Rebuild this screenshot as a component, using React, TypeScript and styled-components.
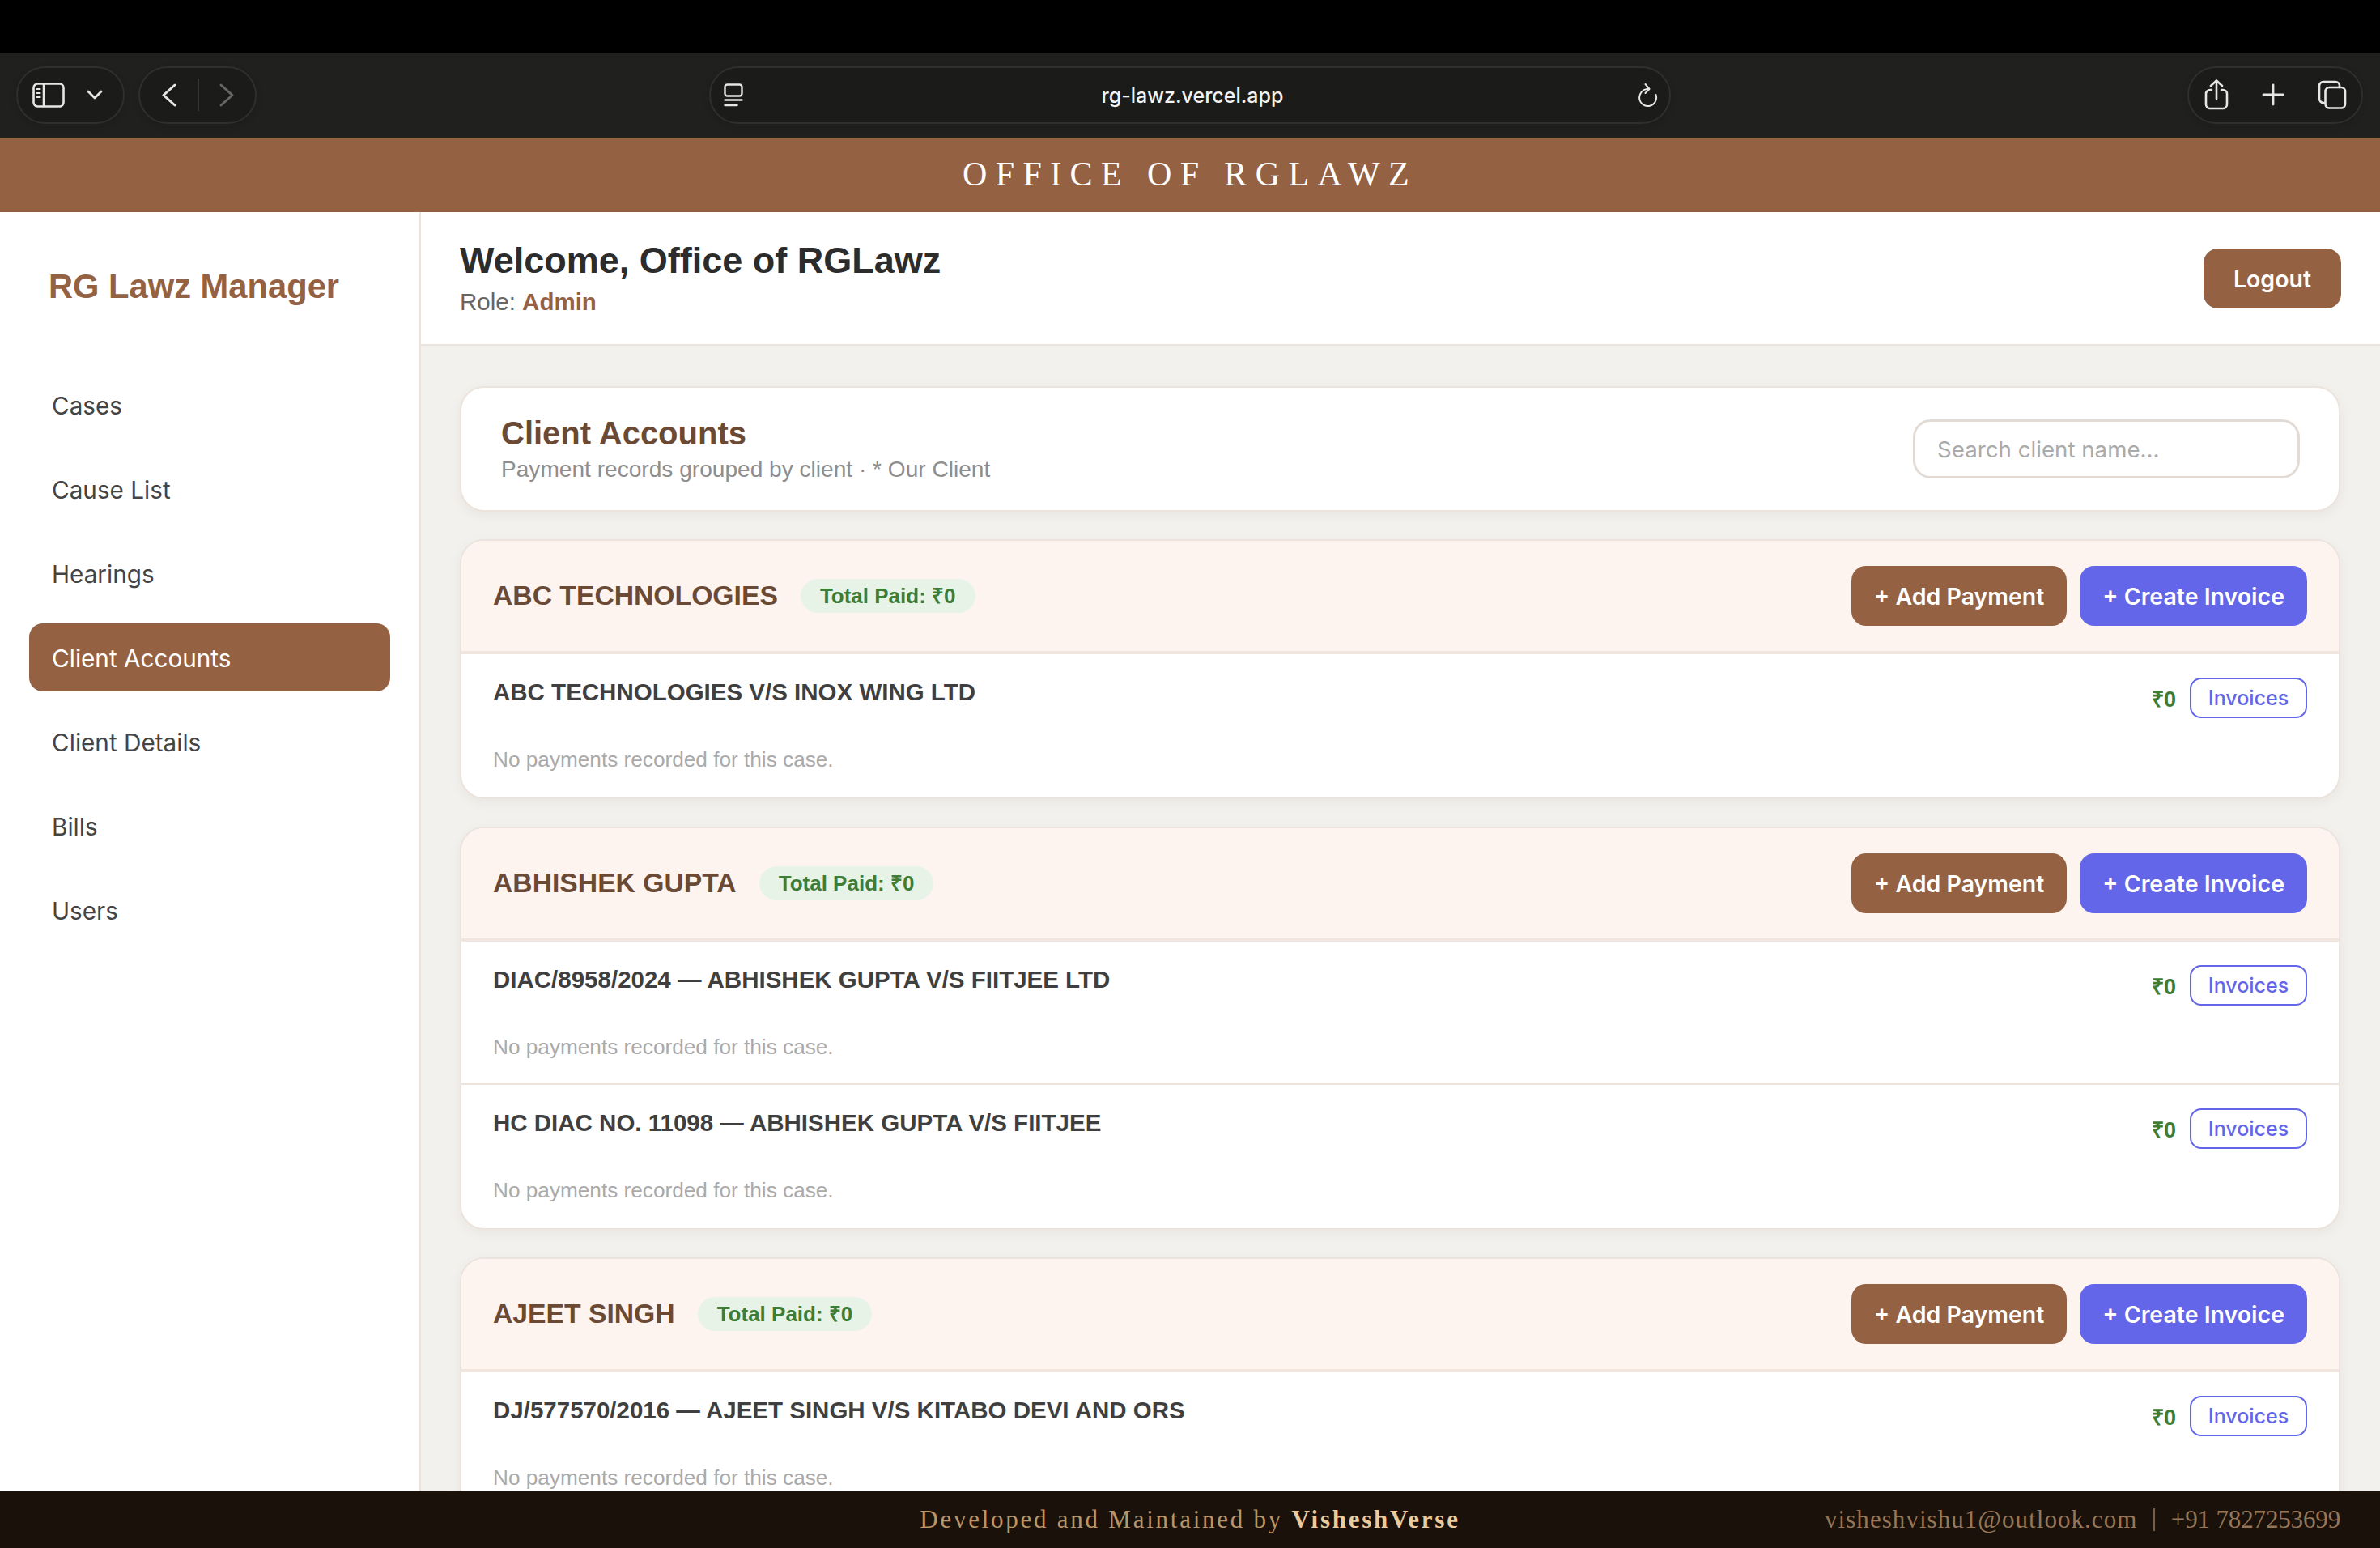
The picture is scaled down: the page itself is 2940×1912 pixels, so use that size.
import React from "react";
import styled, { createGlobalStyle } from "styled-components";

const Global = createGlobalStyle`
  html, body { margin: 0; padding: 0; background: #000; }
  * { box-sizing: border-box; }
  input::placeholder { color: #aaa; opacity: 1; }
`;

const SANS = `"Liberation Sans", Arial, sans-serif`;
const UI = `Inter, "Noto Sans", sans-serif`;
const SERIF = `"Liberation Serif", "Times New Roman", serif`;

const Page = styled.div`
  width: 2940px;
  height: 1912px;
  display: flex;
  flex-direction: column;
  overflow: hidden;
  background: #000;
`;
const TopBlack = styled.div`
  height: 66px;
  flex: none;
  background: #000;
`;
const Toolbar = styled.div`
  height: 104px;
  flex: none;
  background: #20201e;
  display: flex;
  align-items: center;
  padding: 0 21px 2px 20px;
`;
const PillGroup = styled.div`
  display: flex;
  gap: 17px;
`;
const Pill = styled.div<{ $w: number }>`
  width: ${(p) => p.$w}px;
  height: 71px;
  flex: none;
  border-radius: 36px;
  background: #1b1b1a;
  border: 2px solid #2f2f2d;
  box-shadow: 0 3px 8px rgba(0, 0, 0, 0.12);
  display: flex;
  align-items: center;
`;
const UrlPill = styled(Pill)`
  margin-left: 559px;
  justify-content: space-between;
  padding: 0 14px 0 16px;
`;
const UrlText = styled.span`
  font: 500 25px ${UI};
  color: #f2f2f2;
  margin: 2px 0 0 4px;
`;
const RightPill = styled(Pill)`
  margin-left: auto;
  justify-content: space-between;
  padding: 0 18px 0 19px;
`;
const LeftPillInner = styled(Pill)`
  justify-content: space-between;
  padding: 0 25px 0 18px;
`;
const NavPillInner = styled(Pill)`
  justify-content: space-between;
  padding: 0 26px 0 27px;
`;
const Divider = styled.span`
  width: 2px;
  height: 40px;
  background: #333331;
`;

const Banner = styled.div`
  height: 92px;
  flex: none;
  background: #946243;
  color: #fff;
  font: 400 42px ${SERIF};
  letter-spacing: 10.4px;
  display: flex;
  align-items: center;
  justify-content: center;
  padding-bottom: 3px;
`;
const Body = styled.div`
  flex: 1;
  min-height: 0;
  display: flex;
`;
const Sidebar = styled.aside`
  width: 520px;
  flex: none;
  background: #fff;
  border-right: 2px solid #ece3dc;
  padding: 0 36px;
`;
const Logo = styled.div`
  height: 196px;
  padding: 67px 0 0 24px;
  font: 700 41.7px/50px ${SANS};
  color: #946243;
`;
const NavList = styled.nav`
  display: flex;
  flex-direction: column;
  gap: 20px;
`;
const NavItem = styled.div<{ $active?: boolean }>`
  height: 84px;
  display: flex;
  align-items: center;
  padding: 1px 28px 0;
  border-radius: 17px;
  font: 400 29.7px ${UI};
  color: ${(p) => (p.$active ? "#fff" : "#444")};
  background: ${(p) => (p.$active ? "#946243" : "transparent")};
`;
const Main = styled.main`
  flex: 1;
  min-width: 0;
  display: flex;
  flex-direction: column;
  background: #f3f1ed;
  overflow: hidden;
`;
const TopBar = styled.header`
  height: 165px;
  flex: none;
  background: #fff;
  border-bottom: 2px solid #ece3dc;
  display: flex;
  align-items: flex-start;
  justify-content: space-between;
  padding: 33px 48px 0 48px;
`;
const TopBarText = styled.div`
  display: flex;
  flex-direction: column;
`;
const LogoutWrap = styled.div`
  padding-top: 12px;
`;
const Welcome = styled.h1`
  margin: 0;
  font: 700 45px/54px ${SANS};
  color: #2c2c2c;
`;
const Role = styled.div`
  margin-top: 6px;
  font: 400 29.5px/36px ${SANS};
  color: #666;
  b { color: #946243; font-weight: 700; }
`;
const SolidButton = styled.button<{ $bg: string }>`
  height: 74px;
  border: none;
  border-radius: 18px;
  padding: 0 28px;
  background: ${(p) => p.$bg};
  color: #fff;
  font: 600 28.5px ${UI};
  white-space: nowrap;
`;
const Logout = styled(SolidButton)`
  width: 170px;
  padding: 0;
`;
const Content = styled.div`
  padding: 50px 49px 0 48px;
  display: flex;
  flex-direction: column;
  gap: 34px;
`;
const Card = styled.section`
  background: #fff;
  border: 2px solid #ece3dc;
  border-radius: 30px;
  box-shadow: 0 4px 16px rgba(0, 0, 0, 0.05);
  overflow: hidden;
  flex: none;
`;
const HeaderCard = styled(Card)`
  height: 155px;
  display: flex;
  align-items: center;
  justify-content: space-between;
  padding: 0 48px 0 49px;
`;
const PageTitle = styled.h2`
  margin: 0;
  font: 700 40px/48px ${SANS};
  color: #6b4a35;
`;
const PageSub = styled.div`
  margin-top: 3px;
  font: 400 28.1px/36px ${SANS};
  color: #8e8e8e;
`;
const Search = styled.input`
  width: 478px;
  height: 73px;
  border: 3px solid #e2dbd5;
  border-radius: 22px;
  background: #fff;
  padding: 0 27px;
  font: 400 27.7px ${UI};
  outline: none;
`;
const ClientHead = styled.div`
  height: 140px;
  background: #fdf4f0;
  border-bottom: 4px solid #f0e6df;
  display: flex;
  align-items: center;
  padding: 0 39px;
`;
const ClientName = styled.div`
  font: 700 33.7px/44px ${SANS};
  color: #6b4a35;
  margin-bottom: 2px;
`;
const Badge = styled.span`
  margin-left: 28px;
  height: 42px;
  padding: 0 24px;
  border-radius: 21px;
  background: #e8f3e8;
  color: #3e7d36;
  font: 700 26px/42px ${SANS};
  white-space: nowrap;
`;
const Actions = styled.div`
  margin-left: auto;
  display: flex;
  gap: 16px;
`;
const Row = styled.div`
  height: 177px;
  padding: 29px 39px 0;
  border-bottom: 2px solid #ece3dc;
  &:last-child { border-bottom: none; }
`;
const RowTop = styled.div`
  display: flex;
  align-items: flex-start;
  justify-content: space-between;
`;
const RowTitle = styled.div`
  font: 700 29.5px/36px ${SANS};
  color: #3f3f3f;
`;
const RowRight = styled.div`
  display: flex;
  align-items: center;
  gap: 17px;
`;
const Amount = styled.span`
  font: 700 27px ${SANS};
  color: #3e7d36;
`;
const InvoiceButton = styled.button`
  width: 145px;
  height: 50px;
  padding: 0;
  border: 2.5px solid #6366e9;
  border-radius: 14px;
  background: #fff;
  color: #6366e9;
  font: 500 25px ${UI};
`;
const Empty = styled.div`
  margin-top: 34px;
  font: 400 26.2px/34px ${SANS};
  color: #aaa;
`;
const Footer = styled.footer`
  height: 70px;
  flex: none;
  background: #1a110a;
  display: grid;
  grid-template-columns: 1fr auto 1fr;
  align-items: center;
  padding: 0 49px;
  font-family: ${SERIF};
`;
const Credit = styled.div`
  grid-column: 2;
  font-size: 31px;
  letter-spacing: 2.75px;
  color: #bb9468;
  b { color: #ecca9c; font-weight: 700; }
`;
const Contact = styled.div`
  grid-column: 3;
  justify-self: end;
  display: flex;
  align-items: center;
  gap: 20px;
  font-size: 31px;
  letter-spacing: 1.05px;
  color: #977657;
`;
const ContactRule = styled.span`
  width: 1.5px;
  height: 28px;
  background: #7a5f47;
`;
const Phone = styled.span`
  letter-spacing: -0.15px;
`;

const stroke = { fill: "none", stroke: "currentColor", strokeLinecap: "round" as const, strokeLinejoin: "round" as const };
const Glyph = styled.svg<{ $c?: string }>`
  display: block;
  flex: none;
  color: ${(p) => p.$c || "#e6e6e6"};
`;

const SidebarIcon = () => (
  <Glyph width="40" height="31" viewBox="0 0 40 31">
    <g {...stroke} strokeWidth="2.6">
      <rect x="1.5" y="1.5" width="37" height="28" rx="5" />
      <path d="M14 2v27" />
      <path d="M5.5 8h4M5.5 13h4M5.5 18h4" strokeWidth="2.2" />
    </g>
  </Glyph>
);
const Chevron = () => (
  <Glyph width="20" height="12" viewBox="0 0 20 12">
    <path {...stroke} strokeWidth="2.8" d="M2 2l8 8 8-8" />
  </Glyph>
);
const Back = () => (
  <Glyph width="18" height="29" viewBox="0 0 18 29">
    <path {...stroke} strokeWidth="3" d="M16 2L2 14.5 16 27" />
  </Glyph>
);
const Forward = () => (
  <Glyph $c="#666" width="18" height="29" viewBox="0 0 18 29">
    <path {...stroke} strokeWidth="3" d="M2 2l14 12.5L2 27" />
  </Glyph>
);
const ReaderIcon = () => (
  <Glyph width="24" height="29" viewBox="0 0 24 29">
    <g {...stroke} strokeWidth="2.4">
      <rect x="1.5" y="1.5" width="21" height="14" rx="3" />
      <path d="M1.5 20.5h21" />
      <path d="M1.5 27h15" />
    </g>
  </Glyph>
);
const ReloadIcon = () => (
  <Glyph width="24" height="30" viewBox="0 0 24 30">
    <g {...stroke} strokeWidth="2">
      <path d="M11.5 8 A10.5 10.5 0 1 0 21.5 15" />
      <path d="M8.5 2l5 6-5 5" />
    </g>
  </Glyph>
);
const ShareIcon = () => (
  <Glyph width="30" height="38" viewBox="0 0 30 38">
    <g {...stroke} strokeWidth="2.6">
      <path d="M9 13H7a5 5 0 0 0-5 5v13a5 5 0 0 0 5 5h16a5 5 0 0 0 5-5V18a5 5 0 0 0-5-5h-2" />
      <path d="M15 24V2" />
      <path d="M8 8l7-6.5L22 8" />
    </g>
  </Glyph>
);
const PlusIcon = () => (
  <Glyph width="28" height="28" viewBox="0 0 28 28">
    <path {...stroke} strokeWidth="2.8" d="M14 2v24M2 14h24" />
  </Glyph>
);
const TabsIcon = () => (
  <Glyph width="36" height="36" viewBox="0 0 36 36">
    <g {...stroke} strokeWidth="2.6">
      <path d="M9 28H7a5 5 0 0 1-5-5V7a5 5 0 0 1 5-5h15a5 5 0 0 1 5 5v2" />
      <rect x="9.5" y="9" width="24.5" height="25.5" rx="5" />
    </g>
  </Glyph>
);

type CaseRow = { title: string };
type Client = { name: string; cases: CaseRow[] };

const clients: Client[] = [
  { name: "ABC TECHNOLOGIES", cases: [{ title: "ABC TECHNOLOGIES V/S INOX WING LTD" }] },
  {
    name: "ABHISHEK GUPTA",
    cases: [
      { title: "DIAC/8958/2024 — ABHISHEK GUPTA V/S FIITJEE LTD" },
      { title: "HC DIAC NO. 11098 — ABHISHEK GUPTA V/S FIITJEE" },
    ],
  },
  { name: "AJEET SINGH", cases: [{ title: "DJ/577570/2016 — AJEET SINGH V/S KITABO DEVI AND ORS" }] },
];

const navItems = ["Cases", "Cause List", "Hearings", "Client Accounts", "Client Details", "Bills", "Users"];

export default function App() {
  return (
    <Page>
      <Global />
      <TopBlack />
      <Toolbar>
        <PillGroup>
          <LeftPillInner $w={134}>
            <SidebarIcon />
            <Chevron />
          </LeftPillInner>
          <NavPillInner $w={146}>
            <Back />
            <Divider />
            <Forward />
          </NavPillInner>
        </PillGroup>
        <UrlPill $w={1188}>
          <ReaderIcon />
          <UrlText>rg-lawz.vercel.app</UrlText>
          <ReloadIcon />
        </UrlPill>
        <RightPill $w={217}>
          <ShareIcon />
          <PlusIcon />
          <TabsIcon />
        </RightPill>
      </Toolbar>
      <Banner>OFFICE OF RGLAWZ</Banner>
      <Body>
        <Sidebar>
          <Logo>RG Lawz Manager</Logo>
          <NavList>
            {navItems.map((n) => (
              <NavItem key={n} $active={n === "Client Accounts"}>
                {n}
              </NavItem>
            ))}
          </NavList>
        </Sidebar>
        <Main>
          <TopBar>
            <TopBarText>
              <Welcome>Welcome, Office of RGLawz</Welcome>
              <Role>
                Role: <b>Admin</b>
              </Role>
            </TopBarText>
            <LogoutWrap>
              <Logout $bg="#946243">Logout</Logout>
            </LogoutWrap>
          </TopBar>
          <Content>
            <HeaderCard>
              <div>
                <PageTitle>Client Accounts</PageTitle>
                <PageSub>Payment records grouped by client · * Our Client</PageSub>
              </div>
              <Search placeholder="Search client name..." />
            </HeaderCard>
            {clients.map((c) => (
              <Card key={c.name}>
                <ClientHead>
                  <ClientName>{c.name}</ClientName>
                  <Badge>Total Paid: ₹0</Badge>
                  <Actions>
                    <SolidButton $bg="#946243">+ Add Payment</SolidButton>
                    <SolidButton $bg="#6366e9">+ Create Invoice</SolidButton>
                  </Actions>
                </ClientHead>
                <div>
                  {c.cases.map((r) => (
                    <Row key={r.title}>
                      <RowTop>
                        <RowTitle>{r.title}</RowTitle>
                        <RowRight>
                          <Amount>₹0</Amount>
                          <InvoiceButton>Invoices</InvoiceButton>
                        </RowRight>
                      </RowTop>
                      <Empty>No payments recorded for this case.</Empty>
                    </Row>
                  ))}
                </div>
              </Card>
            ))}
          </Content>
        </Main>
      </Body>
      <Footer>
        <Credit>
          Developed and Maintained by <b>VisheshVerse</b>
        </Credit>
        <Contact>
          <span>visheshvishu1@outlook.com</span>
          <ContactRule />
          <Phone>+91 7827253699</Phone>
        </Contact>
      </Footer>
    </Page>
  );
}
